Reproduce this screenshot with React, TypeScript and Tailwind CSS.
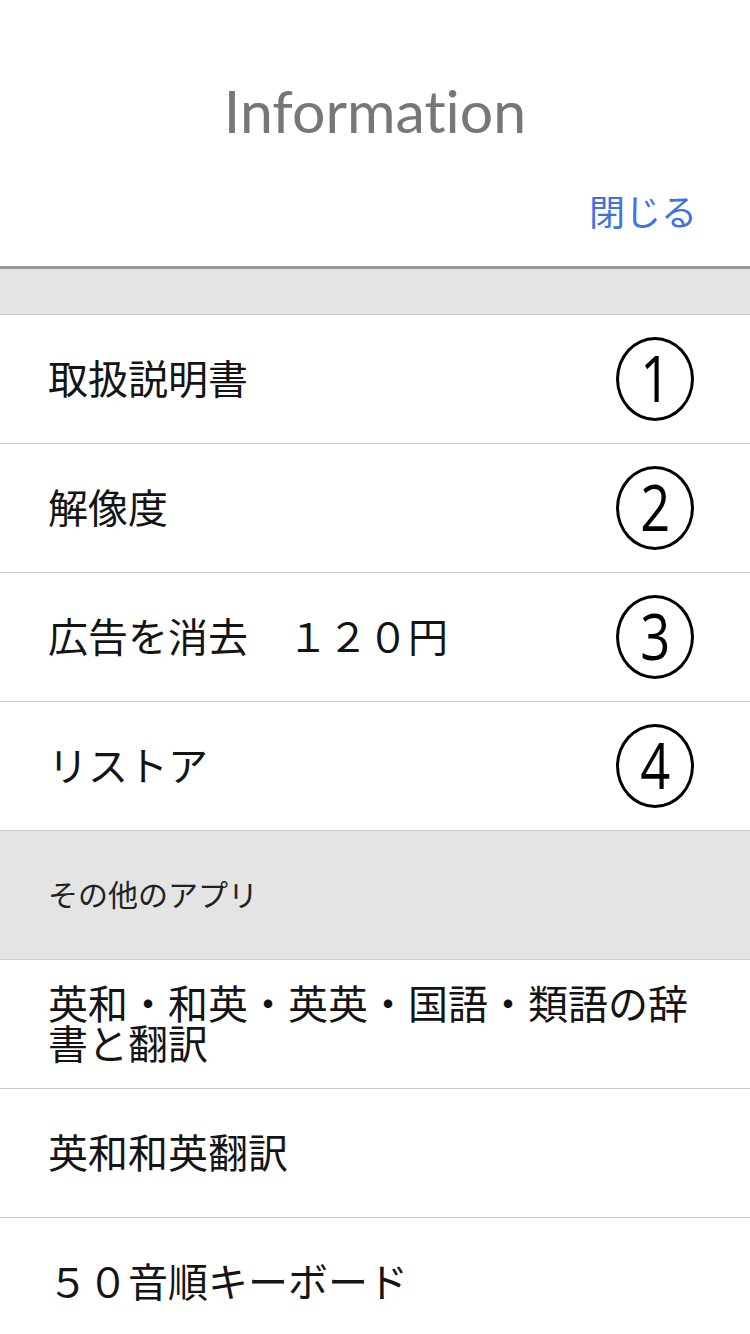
import React from "react";

const jp = { fontFamily: '"Noto Sans CJK JP", "Noto Sans", sans-serif' };

function Circled({ n }: { n: string }) {
  return (
    <div
      className="w-[78px] h-[84px] rounded-[50%] border-[3px] border-black flex items-center justify-center text-black text-[64px] leading-none"
      style={{ fontFamily: '"Open Sans", "Noto Sans", sans-serif' }}
    >
      <span className="inline-block scale-x-[0.82] -mt-[2px]">{n}</span>
    </div>
  );
}

function Row({ label, n }: { label: string; n?: string }) {
  return (
    <div className="h-[129px] border-b border-[#cccccc] bg-white flex items-center justify-between pl-[48px] pr-[56px]">
      <span className="text-[40px] leading-[40px] text-[#141414] -mt-[4px]" style={jp}>
        {label}
      </span>
      {n && <Circled n={n} />}
    </div>
  );
}

function AppRow({ label }: { label: string }) {
  return (
    <div className="h-[129px] border-b border-[#cccccc] bg-white flex items-center pl-[48px] pr-[56px]">
      <span className="text-[40px] leading-[40px] text-[#141414] -mt-[4px]" style={jp}>
        {label}
      </span>
    </div>
  );
}

export default function App() {
  return (
    <div className="w-[750px] min-h-[1334px] bg-white overflow-hidden">
      <div className="h-[266px] bg-white flex flex-col">
        <div className="h-[150px] flex items-center justify-center pt-[70px]">
          <span
            className="text-[59px] leading-none text-[#777777] [font-variant-ligatures:none]"
            style={{ fontFamily: '"Lato", "Noto Sans", sans-serif' }}
          >
            Information
          </span>
        </div>
        <div className="flex justify-end pr-[53px] pt-[42px]">
          <span className="text-[36px] leading-none text-[#3f72e0]" style={jp}>
            閉じる
          </span>
        </div>
      </div>
      <div className="h-[3px] bg-[#9b9b9b]" />
      <div className="h-[46px] bg-[#e4e4e4] border-b border-[#cccccc]" />
      <Row label="取扱説明書" n="1" />
      <Row label="解像度" n="2" />
      <Row label="広告を消去　１２０円" n="3" />
      <Row label="リストア" n="4" />
      <div className="h-[129px] bg-[#e4e4e4] border-b border-[#cccccc] flex items-center pl-[48px]">
        <span className="text-[30px] leading-none text-[#222] -mt-[4px]" style={jp}>
          その他のアプリ
        </span>
      </div>
      <AppRow label="英和・和英・英英・国語・類語の辞書と翻訳" />
      <AppRow label="英和和英翻訳" />
      <AppRow label="５０音順キーボード" />
    </div>
  );
}
